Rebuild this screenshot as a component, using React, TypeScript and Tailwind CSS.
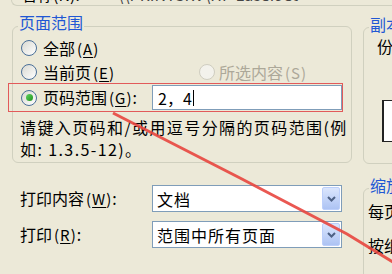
import React from "react";

function Radio({ checked, disabled }: { checked?: boolean; disabled?: boolean }) {
  return (
    <span
      className={
        disabled
          ? "flex h-4 w-4 shrink-0 items-center justify-center rounded-full border border-[#cfcdc0] bg-[#f3f2ec]"
          : "flex h-4 w-4 shrink-0 items-center justify-center rounded-full border border-[#4a6f98] bg-linear-to-br from-[#d9d9d2] to-white"
      }
    >
      {checked && <span className="h-[7px] w-[7px] rounded-full bg-linear-to-br from-[#5fd35f] to-[#1a941a]" />}
    </span>
  );
}

function Key({ k }: { k: string }) {
  return (
    <span className="ml-[2px] text-[15px] tracking-[1px]">
      (<span className="underline underline-offset-2">{k}</span>)
    </span>
  );
}

function Combo({ value }: { value: string }) {
  return (
    <div className="flex h-[27px] w-[190px] items-center border border-[#7f9db9] bg-white pl-[4px]">
      <span className="tracking-[1px]">{value}</span>
      <span className="mr-[1px] ml-auto flex h-[23px] w-[18px] items-center justify-center rounded-[2px] border border-[#bccffb] bg-linear-to-b from-[#dbe6fd] to-[#adc3f3]">
        <svg width="9" height="6" viewBox="0 0 9 6">
          <path d="M1 1 L4.5 4.5 L8 1" fill="none" stroke="#4d6185" strokeWidth="2" />
        </svg>
      </span>
    </div>
  );
}

export default function App() {
  return (
    <div className="relative h-[274px] w-[392px] overflow-hidden bg-[#ece9d8] font-['Noto_Sans_CJK_SC',sans-serif] text-[16px] leading-[18px] text-black">
      {/* bottom of the printer group, cut off by the window */}
      <div className="ml-[11px] h-[6px] w-[400px] overflow-hidden rounded-bl-[6px] border-b border-l border-[#d0d0bf]">
        <div className="-mt-[15px] flex">
          <span className="ml-[9px] w-[96px]">名称(N):</span>
          <span className="text-[#444]">\\PRINTSRV\HP LaserJet</span>
        </div>
      </div>

      <div className="flex">
        <div className="w-[363px] shrink-0">
          <div className="relative mt-[20px] ml-[12px] h-[137px] w-[340px] rounded-[6px] border border-[#d0d0bf]">
            <span className="absolute -top-[14px] left-[5px] bg-[#ece9d8] px-[1px] text-[#2157d4]">页面范围</span>

            <div className="mt-[9px] flex h-[24px] items-center gap-[6px] pl-[8px]">
              <Radio />
              <span>
                全部<Key k="A" />
              </span>
            </div>

            <div className="flex h-[24px] items-center pl-[8px]">
              <div className="flex w-[178px] items-center gap-[6px]">
                <Radio />
                <span>
                  当前页<Key k="E" />
                </span>
              </div>
              <div className="flex items-center gap-[4px] text-[#aca899]">
                <Radio disabled />
                <span>
                  所选内容<span className="ml-[2px] text-[15px] tracking-[1px]">(S)</span>
                </span>
              </div>
            </div>

            <div className="-mt-[1px] -ml-[5px] flex h-[29px] w-[335px] items-center border border-[#e25a5a] pl-[12px]">
              <Radio checked />
              <span className="ml-[6px]">
                页码范围<Key k="G" />:
              </span>
              <div className="ml-auto flex h-[25px] w-[190px] items-center border border-[#7f9db9] bg-white pl-[5px]">
                <span>2，4</span>
                <span className="ml-[1px] h-[16px] w-[1px] bg-black" />
              </div>
            </div>

            <div className="mt-[4px] pl-[7px] leading-[22px] tracking-[1.4px]">
              <div>请键入页码和/或用逗号分隔的页码范围(例</div>
              <div>如: 1.3.5-12)。</div>
            </div>
          </div>

          <div className="mt-[22px] flex h-[27px] items-center pl-[20px]">
            <span className="w-[132px]">
              打印内容<Key k="W" />:
            </span>
            <Combo value="文档" />
          </div>
          <div className="mt-[9px] flex h-[27px] items-center pl-[20px]">
            <span className="w-[132px]">
              打印<Key k="R" />:
            </span>
            <Combo value="范围中所有页面" />
          </div>
        </div>

        <div className="flex-1">
          <div className="relative mt-[21px] h-[137px] w-[60px] rounded-[6px] border border-[#d0d0bf]">
            <span className="absolute -top-[13px] left-[5px] bg-[#ece9d8] px-[1px] text-[#2157d4]">副本</span>
            <div className="mt-[9px] pl-[13px]">份</div>
            <div className="mt-[45px] ml-[18px] h-[42px] w-[30px] border border-l-2 border-[#222] bg-white" />
          </div>
          <div className="relative mt-[24px] h-[120px] w-[60px] rounded-[6px] border border-[#d0d0bf]">
            <span className="absolute -top-[13px] left-[5px] bg-[#ece9d8] px-[1px] text-[#2157d4]">缩放</span>
            <div className="mt-[13px] pl-[4px]">每页</div>
            <div className="mt-[16px] pl-[4px]">按纸</div>
          </div>
        </div>
      </div>

      <svg className="pointer-events-none absolute inset-0" width="392" height="274" viewBox="0 0 392 274">
        <path d="M113 113 L240 178 L347 234 L396 264" fill="none" stroke="#e8463f" strokeWidth="3" strokeOpacity="0.9" />
      </svg>
    </div>
  );
}
